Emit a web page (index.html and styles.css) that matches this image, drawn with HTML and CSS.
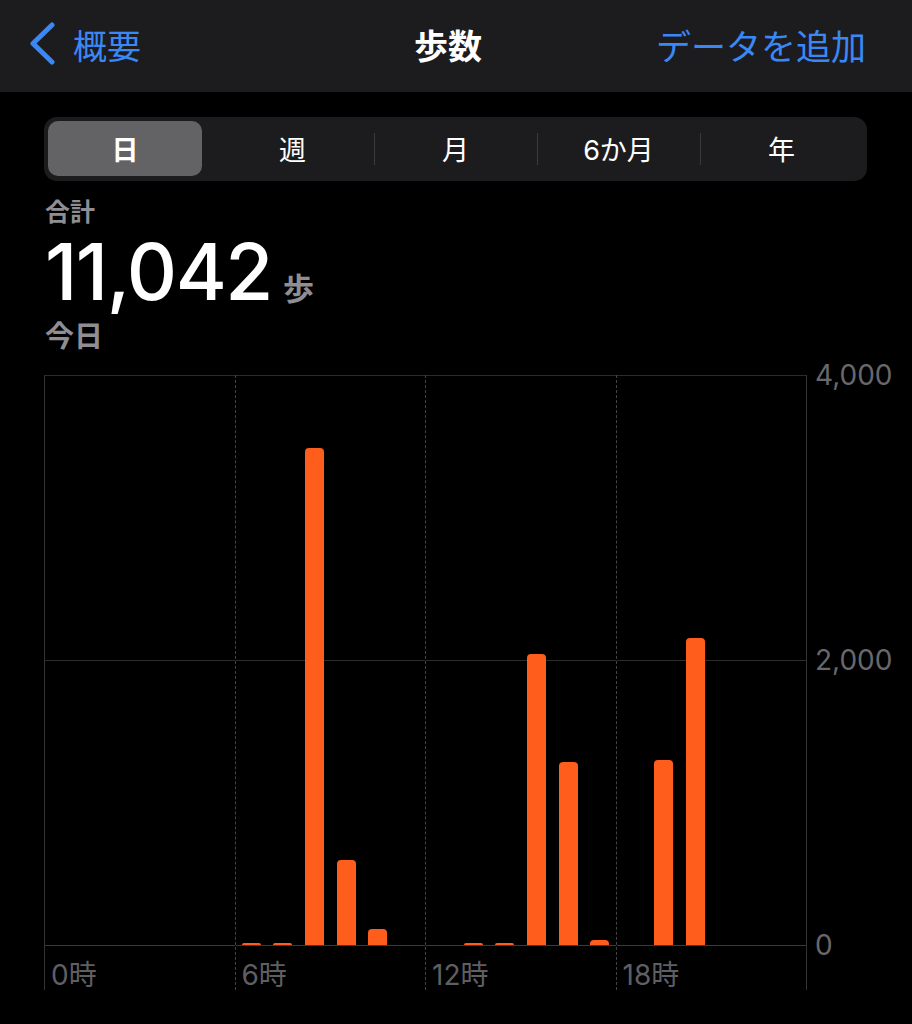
FILE: index.html
```html
<!DOCTYPE html>
<html lang="ja">
<head>
  <meta charset="UTF-8">
  <title>歩数</title>
  <link rel="stylesheet" href="styles.css">
</head>
<body>

  <header class="navbar">
    <a class="back">
      <svg class="chevron" width="26" height="44" viewBox="0 0 26 44">
        <polyline points="22,3 3,21.5 22,40" fill="none" stroke="#3a88f5" stroke-width="5" stroke-linecap="round" stroke-linejoin="round"/>
      </svg>
      概要
    </a>
    <h1 class="title">歩数</h1>
    <a class="add">データを追加</a>
  </header>

  <div class="segments">
    <span class="segment active">日</span>
    <span class="segment">週</span>
    <span class="segment divided">月</span>
    <span class="segment divided">6か月</span>
    <span class="segment divided">年</span>
  </div>

  <div class="summary">
    <div class="label">合計</div>
    <div class="total">11,042<span class="unit">歩</span></div>
    <div class="date">今日</div>
  </div>

  <div class="chart">
    <div class="plot">
      <div class="quarter">
        <div class="bars">
          <div class="slot"></div><div class="slot"></div><div class="slot"></div>
          <div class="slot"></div><div class="slot"></div><div class="slot"></div>
        </div>
        <div class="xlabel">0時</div>
      </div>
      <div class="quarter">
        <div class="bars">
          <div class="slot"><div class="bar" style="height:2px"></div></div>
          <div class="slot"><div class="bar" style="height:2px"></div></div>
          <div class="slot"><div class="bar" style="height:497px"></div></div>
          <div class="slot"><div class="bar" style="height:85px"></div></div>
          <div class="slot"><div class="bar" style="height:16px"></div></div>
          <div class="slot"></div>
        </div>
        <div class="xlabel">6時</div>
      </div>
      <div class="quarter">
        <div class="bars">
          <div class="slot"></div>
          <div class="slot"><div class="bar" style="height:2px"></div></div>
          <div class="slot"><div class="bar" style="height:2px"></div></div>
          <div class="slot"><div class="bar" style="height:291px"></div></div>
          <div class="slot"><div class="bar" style="height:183px"></div></div>
          <div class="slot"><div class="bar" style="height:5px"></div></div>
        </div>
        <div class="xlabel">12時</div>
      </div>
      <div class="quarter">
        <div class="bars">
          <div class="slot"></div>
          <div class="slot"><div class="bar" style="height:185px"></div></div>
          <div class="slot"><div class="bar" style="height:307px"></div></div>
          <div class="slot"></div>
          <div class="slot"></div>
          <div class="slot"></div>
        </div>
        <div class="xlabel">18時</div>
      </div>
    </div>
    <div class="yaxis">
      <span>4,000</span>
      <span>2,000</span>
      <span>0</span>
    </div>
  </div>

</body>
</html>
```

FILE: styles.css
```css
body {
  margin: 0;
  background: #000;
  color: #fff;
  font-family: Inter, "Noto Sans CJK JP", sans-serif;
}

/* Top navigation bar */
.navbar {
  height: 92px;
  box-sizing: border-box;
  padding: 0 46px 4px 30px;
  background: #1c1c1e;
  display: grid;
  grid-template-columns: 1fr auto 1fr;
  align-items: center;
}

.back,
.add {
  color: #3a88f5;
  font-size: 34px;
}

.back {
  display: flex;
  align-items: center;
  gap: 17px;
}

.add {
  justify-self: end;
  font-size: 35px;
}

.title {
  margin: 0;
  font-size: 34px;
  font-weight: 700;
}

/* Segmented control */
.segments {
  margin: 25px 45px 0 44px;
  height: 64px;
  box-sizing: border-box;
  padding: 4px 4px 5px;
  background: #1c1c1e;
  border-radius: 13px;
  display: grid;
  grid-template-columns: repeat(5, 1fr);
}

.segment {
  display: flex;
  align-items: center;
  justify-content: center;
  font-size: 27px;
}

.segment.active {
  margin-right: 9px;
  background: #636366;
  border-radius: 10px;
  font-weight: 600;
}

.segment.divided {
  background: linear-gradient(#3a3a3c, #3a3a3c) no-repeat left center / 1px 32px;
}

/* Total */
.summary {
  padding: 13px 0 0 45px;
}

.label {
  font-size: 25px;
  line-height: 36px;
  color: #8e8e93;
  font-weight: 600;
}

.total {
  margin-bottom: -12px;
  font-size: 78px;
  line-height: 84px;
  font-weight: 500;
  letter-spacing: -1.5px;
}

.unit {
  margin-left: 11px;
  font-size: 31px;
  color: #8e8e93;
  font-weight: 600;
  letter-spacing: 0;
}

.date {
  font-size: 29px;
  line-height: 36px;
  color: #8e8e93;
  font-weight: 600;
}

/* Chart */
.chart {
  display: flex;
  margin: 20px 0 0 44px;
}

.plot {
  width: 761px;
  display: flex;
  border-left: 1px solid #333335;
  border-right: 1px solid #333335;
}

.quarter {
  flex: 1;
  display: flex;
  flex-direction: column;
}

.quarter + .quarter {
  border-left: 1px dashed #444446;
}

.bars {
  height: 569px;
  display: flex;
  align-items: flex-end;
  border-top: 1px solid #2c2c2e;
  border-bottom: 1px solid #3a3a3c;
  background: linear-gradient(#2c2c2e, #2c2c2e) no-repeat 0 284px / 100% 1px;
}

.slot {
  flex: 1;
  height: 100%;
  display: flex;
  justify-content: center;
  align-items: flex-end;
}

.bar {
  width: 19px;
  background: #fe5d1c;
  border-radius: 4px 4px 0 0;
}

.xlabel {
  height: 30px;
  padding: 14px 0 0 6px;
  font-size: 28px;
  line-height: 30px;
  color: #5f5f63;
}

.yaxis {
  height: 600px;
  margin: -15px 0 0 8px;
  display: flex;
  flex-direction: column;
  justify-content: space-between;
  font-size: 28px;
  line-height: 30px;
  color: #68686c;
}
```
